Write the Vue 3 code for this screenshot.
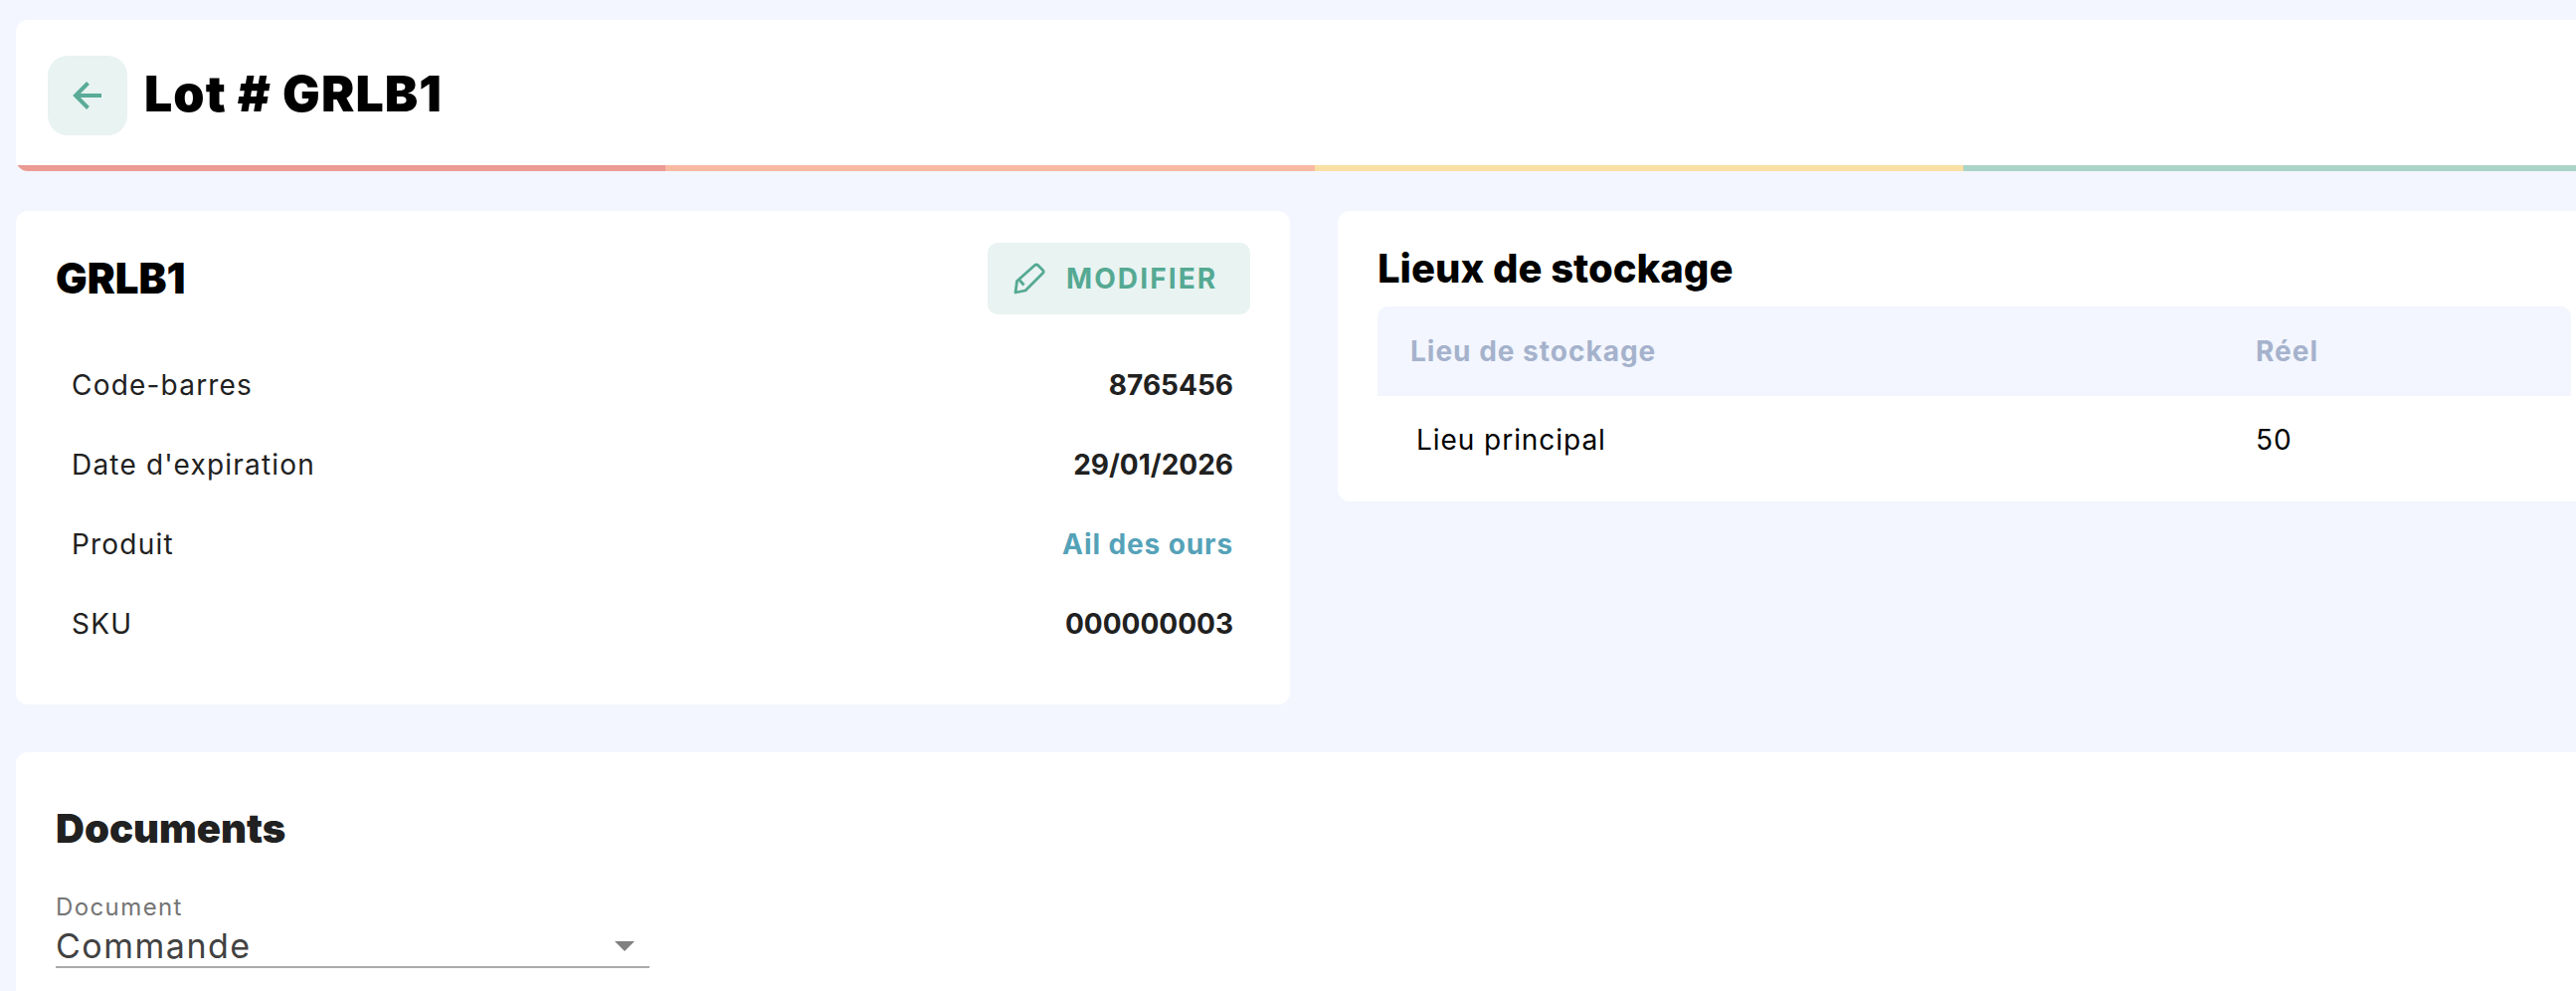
<template>
  <div class="page">
    <div class="content">
      <header class="card top">
        <div class="top-row">
          <button class="back" type="button" aria-label="Retour">
            <svg width="32" height="32" viewBox="0 0 32 32" fill="none" stroke="#5aab97" stroke-width="4">
              <path d="M30 16H4" />
              <path d="M16.5 3.5 4 16 16.5 28.5" />
            </svg>
          </button>
          <h1>Lot # GRLB1</h1>
        </div>
        <div class="steps">
          <span v-for="c in steps" :key="c" :class="c"></span>
        </div>
      </header>

      <div class="columns">
        <section class="card info">
          <div class="info-head">
            <h2>GRLB1</h2>
            <button class="edit" type="button">
              <svg width="34" height="34" viewBox="0 0 34 34" fill="none" stroke="#55a993" stroke-width="2.8" stroke-linejoin="round">
                <path d="M3 31 4.5 19.5 22.5 3.5Q24 2.5 25.5 3.5L30.5 8.5Q32 10 30.5 11.5L13 29Z" />
                <path d="M7 18.5 11.5 23.5" />
              </svg>
              <span>MODIFIER</span>
            </button>
          </div>
          <div v-for="row in details" :key="row.label" class="detail">
            <span>{{ row.label }}</span>
            <strong :class="{ link: row.link }">{{ row.value }}</strong>
          </div>
        </section>

        <section class="card stock">
          <h2>Lieux de stockage</h2>
          <table>
            <thead>
              <tr>
                <th class="first">Lieu de stockage</th>
                <th>Réel</th>
              </tr>
            </thead>
            <tbody>
              <tr>
                <td class="first">Lieu principal</td>
                <td>50</td>
              </tr>
            </tbody>
          </table>
        </section>
      </div>

      <section class="card docs">
        <h2>Documents</h2>
        <div class="select">
          <label>Document</label>
          <div class="value">
            <span>Commande</span>
            <i class="caret"></i>
          </div>
        </div>
      </section>
    </div>
  </div>
</template>

<script setup>
const steps = ['red', 'orange', 'yellow', 'green']

const details = [
  { label: 'Code-barres', value: '8765456' },
  { label: "Date d'expiration", value: '29/01/2026' },
  { label: 'Produit', value: 'Ail des ours', link: true },
  { label: 'SKU', value: '000000003' },
]
</script>

<style>
html, body { background: #f3f6fe; overflow: hidden; }
</style>

<style scoped>
.page {
  width: 2590px;
  height: 996px;
  overflow: hidden;
  background: #f3f6fe;
  font-family: Inter, "Liberation Sans", sans-serif;
  color: #212121;
}

.content {
  width: 2611px;
  padding: 20px 0 0 16px;
  display: flex;
  flex-direction: column;
}

.card {
  background: #fff;
  border-radius: 12px;
  overflow: hidden;
}

.top { height: 152px; display: flex; flex-direction: column; }
.top-row { flex: 1; display: flex; align-items: flex-start; gap: 17px; padding: 36px 0 0 32px; }

.back {
  width: 80px;
  height: 80px;
  border: 0;
  border-radius: 20px;
  background: #e9f3f1;
  display: flex;
  align-items: center;
  justify-content: center;
  padding: 0;
}

h1 {
  margin: 0;
  font-size: 50px;
  font-weight: 900;
  letter-spacing: 1.1px;
  line-height: 77px;
  color: #000;
}

.steps { display: flex; height: 6px; }
.steps span { flex: 1; }
.red { background: #eb9b94; }
.orange { background: #f8b9a2; }
.yellow { background: #f9dfa3; }
.green { background: #abd4c8; }

.columns {
  display: grid;
  grid-template-columns: 1281px 1282px;
  gap: 48px;
  align-items: start;
  margin-top: 40px;
}

.info { height: 496px; padding: 32px 40px 0; box-sizing: border-box; }
.info-head { display: flex; justify-content: space-between; align-items: center; height: 72px; margin-bottom: 31px; }
.info-head h2 { font-size: 42px; font-weight: 900; }

h2 { margin: 0; font-size: 40px; font-weight: 800; line-height: 52px; color: #000; }

.edit {
  width: 264px;
  height: 72px;
  border: 0;
  border-radius: 10px;
  background: #e9f3f1;
  color: #55a993;
  font: 700 28px Inter, "Liberation Sans", sans-serif;
  letter-spacing: 2.1px;
  display: flex;
  align-items: center;
  gap: 20px;
  padding: 0 0 0 25px;
}

.detail {
  height: 80px;
  display: flex;
  justify-content: space-between;
  align-items: center;
  padding: 0 17px 0 16px;
  font-size: 28px;
  letter-spacing: 1.2px;
}

.detail strong { font-weight: 700; letter-spacing: 0; }
.detail .link { color: #55a2b8; letter-spacing: 0.9px; }

.stock { height: 292px; padding: 32px 40px 0; box-sizing: border-box; }
.stock h2 { margin-bottom: 12px; }

table { width: 1200px; table-layout: fixed; border-collapse: collapse; font-size: 28px; }
th, td { padding: 0 0 0 33px; text-align: left; }
.first { width: 817px; }
th {
  height: 90px;
  background: #f3f6fe;
  color: #a5b2cc;
  font-weight: 700;
  letter-spacing: 1px;
}
th:first-child { border-top-left-radius: 10px; }
th:last-child { border-top-right-radius: 10px; }
td { height: 88px; color: #000; letter-spacing: 0.95px; }
td.first { padding-left: 39px; }

.docs { height: 400px; margin-top: 48px; padding: 51px 40px 0; box-sizing: border-box; }
.docs h2 { color: #212121; font-weight: 900; margin-bottom: 38px; }

.select { width: 597px; border-bottom: 2px solid #aaa; }
.select label { display: block; font-size: 24px; line-height: 30px; color: #757575; letter-spacing: 1.4px; }
.value {
  display: flex;
  align-items: center;
  justify-content: space-between;
  height: 41px;
  margin-top: 3px;
  font-size: 34px;
  color: #424242;
  letter-spacing: 1.5px;
}

.caret {
  width: 0;
  height: 0;
  margin-right: 15px;
  border-left: 10px solid transparent;
  border-right: 10px solid transparent;
  border-top: 10px solid #808080;
}
</style>
